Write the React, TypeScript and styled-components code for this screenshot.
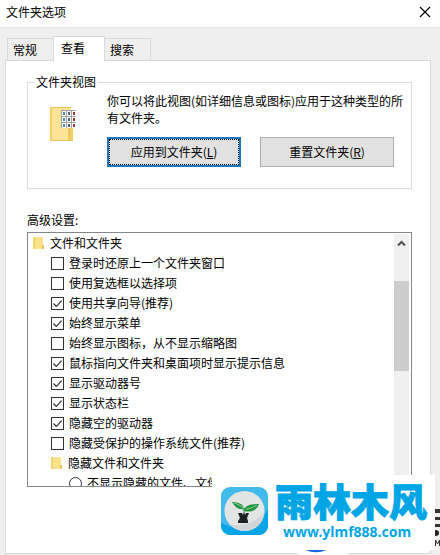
import React from "react";
import styled, { createGlobalStyle, css } from "styled-components";

const GlobalStyle = createGlobalStyle`
  * { box-sizing: border-box; }
  body {
    margin: 0;
    background: #efefef;
    color: #000;
    font: 12px/20px "Noto Sans CJK SC", sans-serif;
  }
  button, input { font: inherit; color: inherit; margin: 0; }
`;

const Dialog = styled.main`
  position: relative;
  display: flex;
  flex-direction: column;
  min-height: 100vh;
  padding-bottom: 1px;
  overflow: hidden;
`;

const TitleBar = styled.header`
  display: flex;
  align-items: center;
  justify-content: space-between;
  height: 28px;
  padding: 0 9px 4px 6px;
  background: #fff;
  border-bottom: 1px solid #e8e8e8;
`;

const Title = styled.h1`
  margin: 0;
  font-size: 12px;
  font-weight: 400;
`;

const CloseButton = styled.button`
  display: flex;
  padding: 0;
  border: 0;
  background: none;
`;

const TabStrip = styled.div`
  display: flex;
  align-items: flex-end;
  height: 32px;
  padding-left: 7px;
`;

const Tab = styled.button<{ $active?: boolean }>`
  height: 22px;
  width: 46px;
  padding: 0 0 0 5px;
  border: 1px solid #d9d9d9;
  border-bottom: 0;
  background: #efefef;
  text-align: left;
  line-height: 20px;
  &:first-child { border-right: 0; }
  &:last-child { border-left: 0; }
  ${(p) =>
    p.$active &&
    css`
      position: relative;
      width: 52px;
      height: 25px;
      margin-bottom: -1px;
      padding: 0 0 2px 7px;
      background: #fff;
    `}
`;

const Panel = styled.section`
  flex: 1;
  margin: 0 9px 0 5px;
  padding: 11px 18px 0 21px;
  border: 1px solid #d9d9d9;
  background: #fff;
`;

const Group = styled.fieldset`
  display: flex;
  gap: 30px;
  margin: 0;
  min-width: 0;
  padding: 0 17px 21px 22px;
  border: 1px solid #dcdcdc;
`;

const Legend = styled.legend`
  margin-left: -16px;
  padding: 0 2px;
`;

const FolderPicture = styled.div`
  padding-top: 14px;
`;

const GroupBody = styled.div`
  flex: 1;
  min-width: 0;
`;

const Description = styled.p`
  margin: 0 -10px 11px 0;
  line-height: 17px;
`;

const ButtonRow = styled.div`
  display: grid;
  grid-template-columns: 1fr 1fr;
  gap: 19px;
`;

const PushButton = styled.button<{ $primary?: boolean }>`
  height: 30px;
  padding: 0;
  border: ${(p) => (p.$primary ? "2px solid #1b75bc" : "1px solid #adadad")};
  background: #e1e1e1;
  line-height: 20px;
  ${(p) =>
    p.$primary &&
    css`
      outline: 1px dotted #000;
      outline-offset: -3px;
    `}
`;

const ListLabel = styled.h2`
  margin: 21px 0 2px;
  font-size: 12px;
  font-weight: 400;
`;

const ListBox = styled.div`
  display: flex;
  justify-content: space-between;
  height: 255px;
  padding-right: 2px;
  border: 1px solid #828790;
  overflow: hidden;
`;

const Tree = styled.ul`
  flex: 1;
  margin: 0;
  padding: 0;
  list-style: none;
`;

const Row = styled.li<{ $level: number }>`
  display: flex;
  align-items: center;
  height: 20px;
  padding-left: ${(p) => 5 + p.$level * 18}px;
  white-space: nowrap;
`;

const Option = styled.label`
  display: flex;
  align-items: center;
  gap: 5px;
`;

const TickBox = styled.input`
  appearance: none;
  width: 13px;
  height: 13px;
  border: 1px solid #333;
  background: #fff;
  &:checked {
    background: #fff
      url("data:image/svg+xml,%3Csvg xmlns='http://www.w3.org/2000/svg' viewBox='0 0 11 11'%3E%3Cpath d='M1.5 5.5 4.3 8.3 9.7 2.7' fill='none' stroke='%23333' stroke-width='1.2'/%3E%3C/svg%3E")
      center / 11px 11px;
  }
`;

const Radio = styled(TickBox)`
  border-radius: 50%;
`;

const FolderLabel = styled.span`
  display: flex;
  align-items: center;
  gap: 5px;
`;

const ScrollBar = styled.div`
  display: flex;
  flex-direction: column;
  width: 15px;
  margin-top: 1px;
  background: #f0f0f0;
`;

const ScrollButton = styled.button`
  display: flex;
  align-items: center;
  justify-content: center;
  height: 18px;
  padding: 0;
  border: 0;
  background: none;
`;

const ScrollTrack = styled.div`
  flex: 1;
  padding-top: 29px;
`;

const ScrollThumb = styled.div`
  height: 90px;
  background: #cdcdcd;
`;

const Watermark = styled.aside`
  position: absolute;
  right: 5px;
  bottom: 5px;
  display: flex;
  align-items: flex-start;
  gap: 7px;
  width: 223px;
  height: 75px;
  padding: 6px 0 0 9px;
  background: #fff;
`;

const LogoBox = styled.div`
  display: flex;
  padding-top: 6px;
`;

const BrandText = styled.div`
  display: flex;
  flex-direction: column;
  color: #00a5e5;
  white-space: nowrap;
`;

const BrandName = styled.strong`
  font-size: 38px;
  font-weight: 900;
  line-height: 38px;
  -webkit-text-stroke: 1px #00a5e5;
`;

const BrandUrl = styled.a`
  margin: 3px 0 0 8px;
  color: inherit;
  font: 700 14px/20px "Noto Sans", sans-serif;
  text-decoration: none;
`;

const EdgeMark = styled.svg`
  position: absolute;
  right: 0;
  bottom: 7px;
`;

const BlueArc = styled.svg`
  position: absolute;
  right: 90px;
  bottom: 0;
`;

function SmallFolder() {
  return (
    <svg width="12" height="14" viewBox="0 0 12 14" aria-hidden="true">
      <path d="M1 1h9v9h1v3H1z" fill="#fbe28a" />
      <path d="M0 1h2v12H0z" fill="#f1d474" />
      <path d="M9 9h2v4H9z" fill="#e8c55b" />
    </svg>
  );
}

function ViewFolder() {
  const cells = [0, 1, 2].flatMap((r) => [0, 1, 2].map((c) => ({ r, c })));
  return (
    <svg width="27" height="36" viewBox="0 0 27 36" aria-hidden="true">
      <path d="M1 1h20v33H1z" fill="#fde398" />
      <path d="M0 1h2v34H0z" fill="#f0cf6c" />
      <path d="M1 1h20v1H1zM1 34h22v1H1z" fill="#e9c65c" />
      <path d="M19 21h4v13h-4z" fill="#f3cf62" />
      <path d="M19 22v12" stroke="#d9b348" />
      <path d="M11 4h15v18H11z" fill="#a2a2a2" />
      {cells.map(({ r, c }) => (
        <g key={`${r}${c}`}>
          <rect x={12 + c * 5} y={5 + r * 6} width="4" height="5" fill="#fff" />
          <rect
            x={13 + c * 5}
            y={6 + r * 6}
            width="2"
            height="3"
            fill={c === 2 ? "#9a3b36" : c === 1 ? "#4e6379" : "#4a93b5"}
          />
        </g>
      ))}
    </svg>
  );
}

function Chevron({ down }: { down?: boolean }) {
  return (
    <svg width="9" height="7" viewBox="0 0 9 7" aria-hidden="true">
      <path d={down ? "M1 1.5 4.5 5 8 1.5" : "M1 5.5 4.5 2 8 5.5"} fill="none" stroke="#505050" strokeWidth="2" />
    </svg>
  );
}

function BrandLogo() {
  return (
    <svg width="47" height="48" viewBox="0 0 47 48" aria-hidden="true">
      <rect width="47" height="48" rx="9" fill="#43bbea" />
      <path d="M47 22v17a9 9 0 0 1-9 9H9a9 9 0 0 1-9-9v-3c18 9 37 3 47-14z" fill="#08a5e6" />
      <circle cx="23.5" cy="24" r="20" fill="#e3e4e4" />
      <path d="M43.5 25a20 20 0 0 1-34 13c15 1 27-3 34-13z" fill="#d2d5d7" />
      <path d="M11 15c7 0 11 2 12 7-6 1-9-2-12-7z" fill="#249645" />
      <path d="M22 24c2-6 8-7 16-7-2 6-8 9-16 7z" fill="#1d963e" />
      <path d="M13 16c4 1 7 3 9 5M25 22c4 0 7-2 11-4" stroke="#8ed08e" fill="none" />
      <path d="M17 26h4l1 2 1-4 1 4 1-2h3l-2 5 1 3v2h-10v-2l2-3z" fill="#202125" />
    </svg>
  );
}

type Item = { kind: "folder" | "check" | "radio"; level: number; text: string; on?: boolean };

const items: Item[] = [
  { kind: "folder", level: 0, text: "文件和文件夹" },
  { kind: "check", level: 1, text: "登录时还原上一个文件夹窗口" },
  { kind: "check", level: 1, text: "使用复选框以选择项" },
  { kind: "check", level: 1, text: "使用共享向导(推荐)", on: true },
  { kind: "check", level: 1, text: "始终显示菜单", on: true },
  { kind: "check", level: 1, text: "始终显示图标，从不显示缩略图" },
  { kind: "check", level: 1, text: "鼠标指向文件夹和桌面项时显示提示信息", on: true },
  { kind: "check", level: 1, text: "显示驱动器号", on: true },
  { kind: "check", level: 1, text: "显示状态栏", on: true },
  { kind: "check", level: 1, text: "隐藏空的驱动器", on: true },
  { kind: "check", level: 1, text: "隐藏受保护的操作系统文件(推荐)" },
  { kind: "folder", level: 1, text: "隐藏文件和文件夹" },
  { kind: "radio", level: 2, text: "不显示隐藏的文件、文件夹" },
];

function TreeItem({ item }: { item: Item }) {
  return (
    <Row $level={item.level}>
      {item.kind === "folder" ? (
        <FolderLabel>
          <SmallFolder />
          {item.text}
        </FolderLabel>
      ) : (
        <Option>
          {item.kind === "check" ? (
            <TickBox type="checkbox" defaultChecked={item.on} />
          ) : (
            <Radio type="radio" name="hidden-files" />
          )}
          {item.text}
        </Option>
      )}
    </Row>
  );
}

export default function App() {
  return (
    <>
      <GlobalStyle />
      <Dialog>
        <TitleBar>
          <Title>文件夹选项</Title>
          <CloseButton aria-label="关闭">
            <svg width="12" height="12" viewBox="0 0 12 12" aria-hidden="true">
              <path d="M1 1l10 10M11 1L1 11" stroke="#000" strokeWidth="1.2" />
            </svg>
          </CloseButton>
        </TitleBar>
        <TabStrip role="tablist">
          <Tab role="tab">常规</Tab>
          <Tab role="tab" aria-selected $active>
            查看
          </Tab>
          <Tab role="tab">搜索</Tab>
        </TabStrip>
        <Panel>
          <Group>
            <Legend>文件夹视图</Legend>
            <FolderPicture>
              <ViewFolder />
            </FolderPicture>
            <GroupBody>
              <Description>你可以将此视图(如详细信息或图标)应用于这种类型的所有文件夹。</Description>
              <ButtonRow>
                <PushButton $primary>
                  应用到文件夹(<u>L</u>)
                </PushButton>
                <PushButton>
                  重置文件夹(<u>R</u>)
                </PushButton>
              </ButtonRow>
            </GroupBody>
          </Group>
          <ListLabel>高级设置:</ListLabel>
          <ListBox>
            <Tree>
              {items.map((item) => (
                <TreeItem key={item.text} item={item} />
              ))}
            </Tree>
            <ScrollBar>
              <ScrollButton aria-label="向上滚动">
                <Chevron />
              </ScrollButton>
              <ScrollTrack>
                <ScrollThumb />
              </ScrollTrack>
              <ScrollButton aria-label="向下滚动">
                <Chevron down />
              </ScrollButton>
            </ScrollBar>
          </ListBox>
        </Panel>
        <BlueArc width="54" height="5" viewBox="0 0 54 5" aria-hidden="true">
          <path d="M0 5C5 1 9 0 14 0h26c6 0 9 1 14 5z" fill="#fff" />
          <path d="M10 0h20c-6 3-14 3-20 0z" fill="#1768e8" />
        </BlueArc>
        <Watermark>
          <LogoBox>
            <BrandLogo />
          </LogoBox>
          <BrandText>
            <BrandName>雨林木风</BrandName>
            <BrandUrl href="#">www.ylmf888.com</BrandUrl>
          </BrandText>
        </Watermark>
        <EdgeMark width="5" height="40" viewBox="0 0 5 40" aria-hidden="true">
          <path d="M0 1h5v4H0zM0 9h5v3H0zM0 16h5v3H0z" fill="#333" />
          <path d="M0 22c3 0 4 1 4 3s-1 3-4 3z" fill="#222" />
          <path d="M0.500 38V32l2 4 2-4v6" fill="none" stroke="#333" />
        </EdgeMark>
      </Dialog>
    </>
  );
}
